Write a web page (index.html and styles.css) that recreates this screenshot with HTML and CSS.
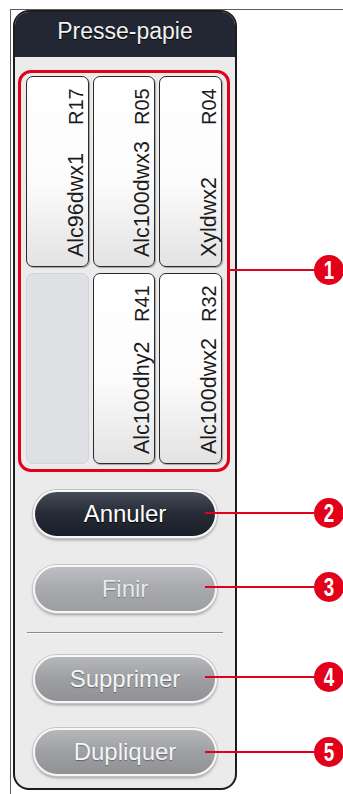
FILE: index.html
```html
<!DOCTYPE html>
<html lang="fr">
<head>
<meta charset="utf-8">
<title>Presse-papie</title>
<link rel="stylesheet" href="styles.css">
</head>
<body>
<div class="frame">
  <div class="panel">
    <div class="panel-head">Presse-papie</div>
    <div class="panel-body">
      <div class="clips">
        <div class="tile"><div class="label"><span class="name">Alc96dwx1</span><span class="code">R17</span></div></div>
        <div class="tile"><div class="label"><span class="name">Alc100dwx3</span><span class="code">R05</span></div></div>
        <div class="tile"><div class="label"><span class="name">Xyldwx2</span><span class="code">R04</span></div></div>
        <div class="tile tile-empty"></div>
        <div class="tile"><div class="label"><span class="name">Alc100dhy2</span><span class="code">R41</span></div></div>
        <div class="tile"><div class="label"><span class="name">Alc100dwx2</span><span class="code">R32</span></div></div>
      </div>
      <div class="btn btn-dark btn-annuler">Annuler</div>
      <div class="btn btn-light btn-finir">Finir</div>
      <div class="sep"></div>
      <div class="btn btn-gray btn-supprimer">Supprimer</div>
      <div class="btn btn-gray btn-dupliquer">Dupliquer</div>
    </div>
  </div>

  <div class="callout callout-1"><span class="line"></span><span class="num"><span class="digit">1</span></span></div>
  <div class="callout callout-2"><span class="line"></span><span class="num"><span class="digit">2</span></span></div>
  <div class="callout callout-3"><span class="line"></span><span class="num"><span class="digit">3</span></span></div>
  <div class="callout callout-4"><span class="line"></span><span class="num"><span class="digit">4</span></span></div>
  <div class="callout callout-5"><span class="line"></span><span class="num"><span class="digit">5</span></span></div>
</div>
</body>
</html>
```

FILE: styles.css
```css
* {
  box-sizing: border-box;
}

html,
body {
  margin: 0;
  padding: 0;
  background: #ffffff;
  overflow: hidden;
  font-family: "Liberation Sans", Arial, sans-serif;
}

.frame {
  position: relative;
  margin: 9px 0 0 10px;
  height: 785px;
  border-top: 1px solid #5c5c5c;
  border-left: 1px solid #5c5c5c;
  padding-left: 2px;
}

.panel {
  width: 224px;
  height: 780px;
  border: 2px solid #1d1d1f;
  border-radius: 16px;
  background: #ebebeb;
  overflow: hidden;
  display: flex;
  flex-direction: column;
}

.panel-head {
  height: 45px;
  flex: none;
  background: #222733;
  color: #f1f1f1;
  font-size: 23px;
  line-height: 38px;
  text-align: center;
  text-shadow: 0 1px 1px #000;
}

.panel-body {
  flex: 1;
  display: flex;
  flex-direction: column;
  align-items: center;
  padding-top: 13px;
}

.clips {
  align-self: flex-start;
  margin-left: 3px;
  width: 212px;
  height: 402px;
  border: 3px solid #e2001a;
  border-radius: 13px;
  padding: 3px 5px 5px 5px;
  display: grid;
  grid-template-columns: repeat(3, 1fr);
  grid-template-rows: repeat(2, 1fr);
  gap: 6px 4px;
}

.tile {
  border: 1.5px solid #2a2a2a;
  border-radius: 7px;
  background: linear-gradient(#ffffff 0%, #fcfcfc 55%, #e3e3e3 100%);
  box-shadow: 1px 1px 1px rgba(0, 0, 0, 0.3);
  display: flex;
  justify-content: flex-end;
  padding-right: 1px;
}

.tile-empty {
  background: #dfe0e3;
  border: 1px solid #d3d4d7;
  box-shadow: none;
}

.label {
  writing-mode: vertical-rl;
  transform: rotate(180deg);
  display: flex;
  justify-content: space-between;
  align-items: baseline;
  padding-top: 9px;
  padding-bottom: 11px;
  line-height: 22px;
  color: #1b1b1b;
}

.name {
  font-size: 21.5px;
}

.code {
  font-size: 20px;
}

.btn {
  flex: none;
  width: 184px;
  height: 48px;
  border-radius: 24px;
  border: 2px solid #f7f7f7;
  box-shadow: 0 0 0 1px #c4c4c4, 0 2px 3px rgba(0, 0, 0, 0.35);
  display: flex;
  align-items: center;
  justify-content: center;
  font-size: 24px;
}

.btn-dark {
  background: linear-gradient(#464c59 0%, #282d39 45%, #1a1e29 100%);
  color: #ffffff;
  text-shadow: 0 1px 1px #000;
}

.btn-light {
  background: linear-gradient(#bcbec1 0%, #a7a9ac 50%, #9c9ea2 100%);
  color: #e8e8e8;
  text-shadow: 0 1px 1px rgba(0, 0, 0, 0.3);
}

.btn-gray {
  background: linear-gradient(#b5b7ba 0%, #9d9fa3 50%, #909296 100%);
  color: #f5f5f5;
  text-shadow: 0 1px 1px rgba(0, 0, 0, 0.35);
}

.btn-annuler {
  margin-top: 18px;
}

.btn-finir {
  margin-top: 27px;
}

.sep {
  flex: none;
  width: 196px;
  height: 2px;
  margin-top: 19px;
  border-top: 1px solid #8c8c8c;
  border-bottom: 1px solid #f8f8f8;
}

.btn-supprimer {
  margin-top: 21px;
}

.btn-dupliquer {
  margin-top: 25px;
}

/* annotation callouts (overlay) */
.callout {
  position: absolute;
  height: 30px;
  display: flex;
  align-items: center;
}

.callout .line {
  flex: 1;
  height: 2px;
  background: #e2001a;
}

.callout .num {
  flex: none;
  width: 30px;
  height: 30px;
  border-radius: 50%;
  background: #e2001a;
  display: flex;
  align-items: center;
  justify-content: center;
  color: #ffffff;
  font-weight: bold;
  font-size: 25px;
}

.callout .digit {
  display: block;
  transform: scaleX(0.75);
  line-height: 1;
}

.callout-1 {
  left: 219px;
  width: 114px;
  top: 245px;
}

.callout-2 {
  left: 194px;
  width: 139px;
  top: 488px;
}

.callout-3 {
  left: 194px;
  width: 139px;
  top: 562px;
}

.callout-4 {
  left: 194px;
  width: 139px;
  top: 652px;
}

.callout-5 {
  left: 194px;
  width: 139px;
  top: 727px;
}
```
